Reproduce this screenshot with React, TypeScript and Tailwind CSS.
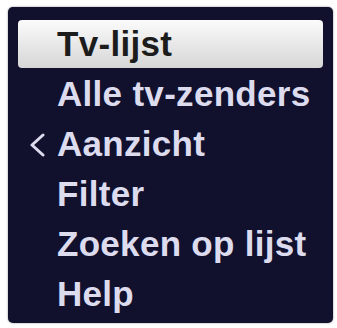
const items = ['Tv-lijst', 'Alle tv-zenders', 'Aanzicht', 'Filter', 'Zoeken op lijst', 'Help'];

const Chevron = () => (
  <svg width="16" height="24" viewBox="0 0 16 24" fill="none" className="text-[#dcdcee]">
    <polyline points="14,2 3,12 14,22" stroke="currentColor" strokeWidth="3" strokeLinecap="round" strokeLinejoin="round" />
  </svg>
);

const App = () => {
  return (
    <div className="w-[337px] h-[328px] bg-white pl-[8px] pt-[7px]">
      <div className="w-[325px] h-[316px] bg-[#11112e] rounded-[5px] shadow-[0_0_2px_rgba(0,0,0,0.5)] pl-[10px] pr-[10px] pt-[13px] flex flex-col gap-[2px]">
        {items.map((label, index) => (
          <div
            key={label}
            className={`h-[48px] flex items-center rounded-[4px] ${
              index === 0 ? 'bg-gradient-to-b from-[#fbfbfb] to-[#d6d6d6] text-[#1c1c1c]' : 'text-[#dcdcee]'
            }`}
          >
            <div className="w-[39px] pl-[11px] pt-[2px] flex items-center">
              {label === 'Aanzicht' && <Chevron />}
            </div>
            <span className="font-['Liberation_Sans',Arial,sans-serif] font-bold text-[35px] tracking-[0.3px] leading-[48px] whitespace-nowrap">
              {label}
            </span>
          </div>
        ))}
      </div>
    </div>
  );
};

export default App;
